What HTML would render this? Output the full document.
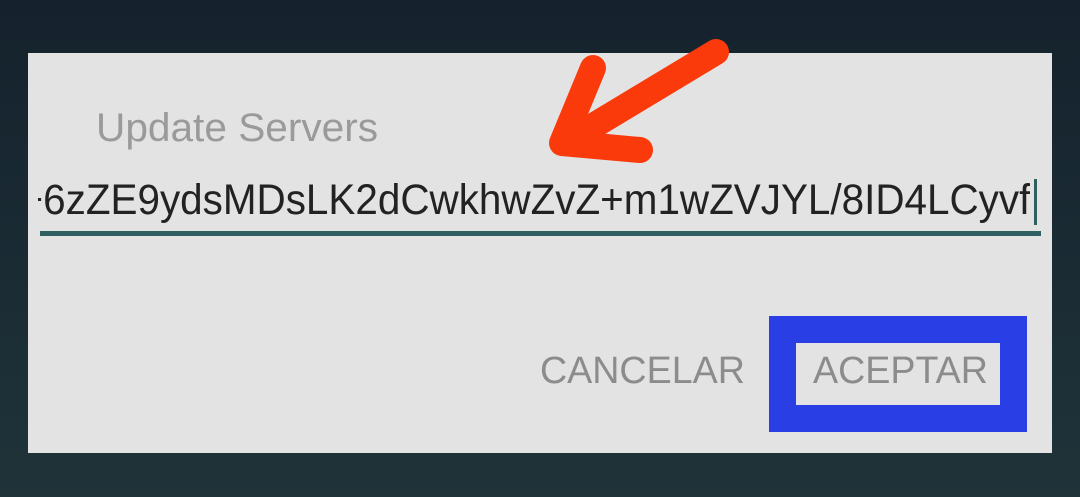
<!DOCTYPE html>
<html><head><style>
html,body{margin:0;padding:0;}
body{width:1080px;height:497px;position:relative;overflow:hidden;background:#1b2a33;background:linear-gradient(180deg,#15222d 0%,#1b2c35 60%,#1f3339 100%);font-family:"Liberation Sans",sans-serif;}
.dlg{position:absolute;left:28px;top:53px;width:1024px;height:400px;background:#e3e3e3;}
.title{position:absolute;left:96px;top:106px;font-size:40px;color:#9a9a9a;transform:scaleX(1.015);transform-origin:left;white-space:nowrap;}
.field{position:absolute;left:38px;top:176px;width:992px;height:54px;overflow:hidden;}
.txt{position:absolute;right:0;top:0;font-size:43px;color:#222;white-space:nowrap;transform:scaleX(0.94);transform-origin:right;}
.cur{position:absolute;left:1034px;top:179px;width:3px;height:46px;background:#2f5f60;}
.line{position:absolute;left:40px;top:231px;width:1001px;height:5px;background:#2f5f60;}
.btn{position:absolute;top:350px;font-size:38px;color:#8c8c8c;transform:scaleX(0.99);transform-origin:left;white-space:nowrap;}
.box{position:absolute;left:769px;top:316px;width:204px;height:62px;border:27px solid #2a3ee6;}
</style></head><body>
<div class="dlg"></div>
<div class="title">Update Servers</div>
<div class="field"><div class="txt">+6zZE9ydsMDsLK2dCwkhwZvZ+m1wZVJYL/8ID4LCyvf</div></div>
<div class="cur"></div>
<div class="line"></div>
<div class="btn" style="left:540px">CANCELAR</div>
<div class="box"></div>
<div class="btn" style="left:813px">ACEPTAR</div>
<svg style="position:absolute;left:0;top:0" width="1080" height="497">
<g stroke="#fb3a0c" stroke-width="26" stroke-linecap="round" stroke-linejoin="round" fill="none">
<path d="M716 52 L570 140"/>
<path d="M593 68 L562 143 L640 150"/>
</g>
</svg>
</body></html>
